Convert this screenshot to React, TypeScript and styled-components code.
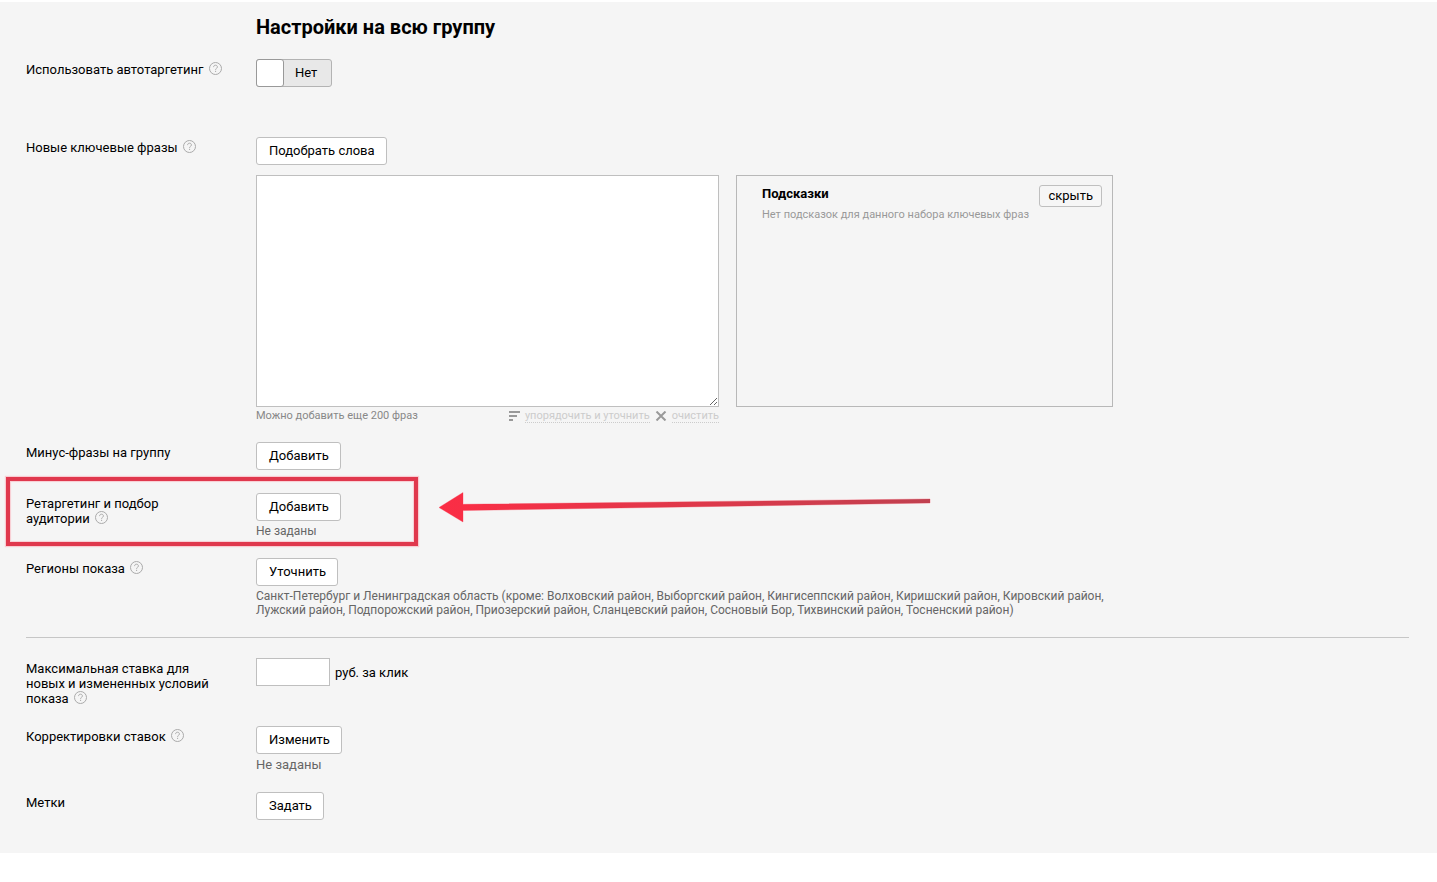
import React from 'react';
import styled, { createGlobalStyle } from 'styled-components';

const GlobalStyle = createGlobalStyle`
  body {
    margin: 0;
    background: #fff;
    color: #000;
    font: 13px/15px Roboto, 'Noto Sans', sans-serif;
  }
  *, *::before, *::after { box-sizing: border-box; }
  button, input, textarea { font: inherit; color: inherit; margin: 0; }
`;

const Page = styled.main`
  margin-top: 2px;
  padding: 12px 28px 33px 26px;
  background: #f5f5f5;
`;

const Title = styled.h2`
  margin: 0 0 19px 230px;
  font-size: 20px;
  line-height: 26px;
  font-weight: 700;
`;

const Row = styled.section<{ $gap?: number }>`
  position: relative;
  display: grid;
  grid-template-columns: 230px minmax(0, 1fr);
  align-items: start;
  margin-bottom: ${(p) => p.$gap ?? 20}px;
`;

const RowLabel = styled.div`
  max-width: 200px;
  padding-top: 3px;
`;

const LastWord = styled.span`
  white-space: nowrap;
`;

const HelpButton = styled.button`
  width: 13px;
  height: 13px;
  margin: 0 0 0 5px;
  padding: 0;
  border: 0;
  background: none;
  vertical-align: -1px;
  line-height: 0;
  cursor: pointer;
`;

const Button = styled.button`
  display: block;
  height: 28px;
  padding: 0 11px 1px 12px;
  border: 1px solid #bfbfbf;
  border-radius: 3px;
  background: #fff;
  cursor: pointer;
`;

const SmallButton = styled(Button)`
  flex: none;
  height: 22px;
  padding: 0 8px 1px;
  background: #f6f6f6;
`;

const Note = styled.p<{ $large?: boolean }>`
  margin: 3px 0 0;
  color: #666;
  font-size: ${(p) => (p.$large ? 13 : 12)}px;
  line-height: ${(p) => (p.$large ? 15 : 14)}px;
`;

const Toggle = styled.label`
  display: flex;
  width: 76px;
  height: 28px;
  border: 1px solid #b3b3b3;
  border-radius: 3px;
  background: #e8e8e8;
  line-height: 26px;
  cursor: pointer;
`;

const ToggleInput = styled.input`
  appearance: none;
  width: 28px;
  height: 28px;
  margin: -1px 11px 0 -1px;
  border: 1px solid #999;
  border-radius: 3px;
  background: #fff;
`;

const PhraseArea = styled.div`
  display: grid;
  grid-template-columns: 463px 377px;
  column-gap: 17px;
  margin-top: 10px;
`;

const PhraseInput = styled.textarea`
  display: block;
  width: 100%;
  height: 232px;
  padding: 6px;
  border: 1px solid #bfbfbf;
  border-radius: 0;
  background: #fff;
  outline: 0;
`;

const PhraseFooter = styled.div`
  display: flex;
  justify-content: space-between;
  margin-top: 2px;
  color: #888;
  font-size: 11px;
  line-height: 14px;
`;

const Actions = styled.div`
  display: flex;
  gap: 5px;
`;

const Action = styled.button`
  display: flex;
  align-items: center;
  gap: 5px;
  height: 14px;
  padding: 0;
  border: 0;
  background: none;
  color: #ccc;
`;

const Dotted = styled.span`
  border-bottom: 1px dotted #ccc;
  line-height: 13px;
`;

const Hints = styled.aside`
  display: flex;
  justify-content: space-between;
  align-items: flex-start;
  height: 232px;
  padding: 9px 10px 0 25px;
  border: 1px solid #b8b8b8;
`;

const HintsTitle = styled.h3`
  margin: 1px 0 7px;
  font-size: 13px;
  line-height: 15px;
`;

const HintsText = styled.p`
  margin: 0;
  color: #999;
  font-size: 11px;
  line-height: 14px;
  white-space: nowrap;
`;

const Divider = styled.hr`
  height: 1px;
  margin: 0 0 20px;
  border: 0;
  background: #c6c6c6;
`;

const BidField = styled.label`
  display: flex;
  align-items: center;
  gap: 5px;
`;

const BidInput = styled.input`
  width: 74px;
  height: 28px;
  padding: 0 6px;
  border: 1px solid #bfbfbf;
  border-radius: 0;
  background: #fff;
`;

const Highlight = styled.div`
  position: absolute;
  top: -16px;
  left: -20px;
  width: 412px;
  height: 69px;
  border: 4px solid #e0384d;
  box-shadow: 0 0 1px 1px #f9ccd2, inset 0 0 1px 1px #f9ccd2;
  pointer-events: none;
`;

const Arrow = styled.svg`
  position: absolute;
  top: -3px;
  left: 412px;
  pointer-events: none;
`;

function Help() {
  return (
    <HelpButton type="button" aria-label="Справка">
      <svg width="13" height="13" viewBox="0 0 13 13" fill="none" stroke="#aaa">
        <circle cx="6.5" cy="6.5" r="6" />
        <path d="M4.6 5.1C4.6 3.800 5.400 3.200 6.500 3.200s1.900.7 1.900 1.700c0 1.400-1.800 1.500-1.800 2.900M6.600 8.800v1.200" />
      </svg>
    </HelpButton>
  );
}

function Label({ text, help }: { text: string; help?: boolean }) {
  if (!help) return <RowLabel>{text}</RowLabel>;
  // The help icon must never wrap away from the last word.
  const cut = text.lastIndexOf(' ') + 1;
  return (
    <RowLabel>
      {text.slice(0, cut)}
      <LastWord>
        {text.slice(cut)}
        <Help />
      </LastWord>
    </RowLabel>
  );
}

export default function App() {
  return (
    <>
      <GlobalStyle />
      <Page>
        <Title>Настройки на всю группу</Title>

        <Row $gap={50}>
          <Label text="Использовать автотаргетинг" help />
          <Toggle>
            <ToggleInput type="checkbox" />
            Нет
          </Toggle>
        </Row>

        <Row $gap={19}>
          <Label text="Новые ключевые фразы" help />
          <div>
            <Button type="button">Подобрать слова</Button>
            <PhraseArea>
              <div>
                <PhraseInput aria-label="Новые ключевые фразы" />
                <PhraseFooter>
                  <span>Можно добавить еще 200 фраз</span>
                  <Actions>
                    <Action type="button" disabled>
                      <svg width="11" height="10" viewBox="0 0 11 10" fill="#999">
                        <path d="M0 0h11v2H0zM0 4h8v2H0zM0 8h4v2H0z" />
                      </svg>
                      <Dotted>упорядочить и уточнить</Dotted>
                    </Action>
                    <Action type="button" disabled>
                      <svg width="12" height="10" viewBox="0 0 12 10" fill="none" stroke="#999" strokeWidth="2">
                        <path d="M1.500.5l9 9M10.500.5l-9 9" />
                      </svg>
                      <Dotted>очистить</Dotted>
                    </Action>
                  </Actions>
                </PhraseFooter>
              </div>
              <Hints>
                <div>
                  <HintsTitle>Подсказки</HintsTitle>
                  <HintsText>Нет подсказок для данного набора ключевых фраз</HintsText>
                </div>
                <SmallButton type="button">скрыть</SmallButton>
              </Hints>
            </PhraseArea>
          </div>
        </Row>

        <Row $gap={23}>
          <Label text="Минус-фразы на группу" />
          <div>
            <Button type="button">Добавить</Button>
          </div>
        </Row>

        <Row>
          <Label text="Ретаргетинг и подбор аудитории" help />
          <div>
            <Button type="button">Добавить</Button>
            <Note>Не заданы</Note>
          </div>
          <Highlight />
          <Arrow width="494" height="36" viewBox="0 0 494 36">
            <defs>
              <linearGradient id="shaft" x1="0" x2="1" y1="0" y2="0">
                <stop offset="0" stopColor="#fb2d45" />
                <stop offset="0.5" stopColor="#e0384a" />
                <stop offset="1" stopColor="#c0404f" />
              </linearGradient>
            </defs>
            <path
              d="M1 17.500L25 2.500V14.300L492 9V13L25 20.500V32Z"
              fill="url(#shaft)"
              stroke="#f7b5bd"
              strokeWidth="1"
              paintOrder="stroke"
            />
          </Arrow>
        </Row>

        <Row>
          <Label text="Регионы показа" help />
          <div>
            <Button type="button">Уточнить</Button>
            <Note>
              Санкт-Петербург и Ленинградская область (кроме: Волховский район, Выборгский район, Кингисеппский
              район, Киришский район, Кировский район,
              <br />
              Лужский район, Подпорожский район, Приозерский район, Сланцевский район, Сосновый Бор, Тихвинский
              район, Тосненский район)
            </Note>
          </div>
        </Row>

        <Divider />

        <Row>
          <Label text="Максимальная ставка для новых и измененных условий показа" help />
          <BidField>
            <BidInput type="text" />
            руб. за клик
          </BidField>
        </Row>

        <Row>
          <Label text="Корректировки ставок" help />
          <div>
            <Button type="button">Изменить</Button>
            <Note $large>Не заданы</Note>
          </div>
        </Row>

        <Row $gap={0}>
          <Label text="Метки" />
          <div>
            <Button type="button">Задать</Button>
          </div>
        </Row>
      </Page>
    </>
  );
}
